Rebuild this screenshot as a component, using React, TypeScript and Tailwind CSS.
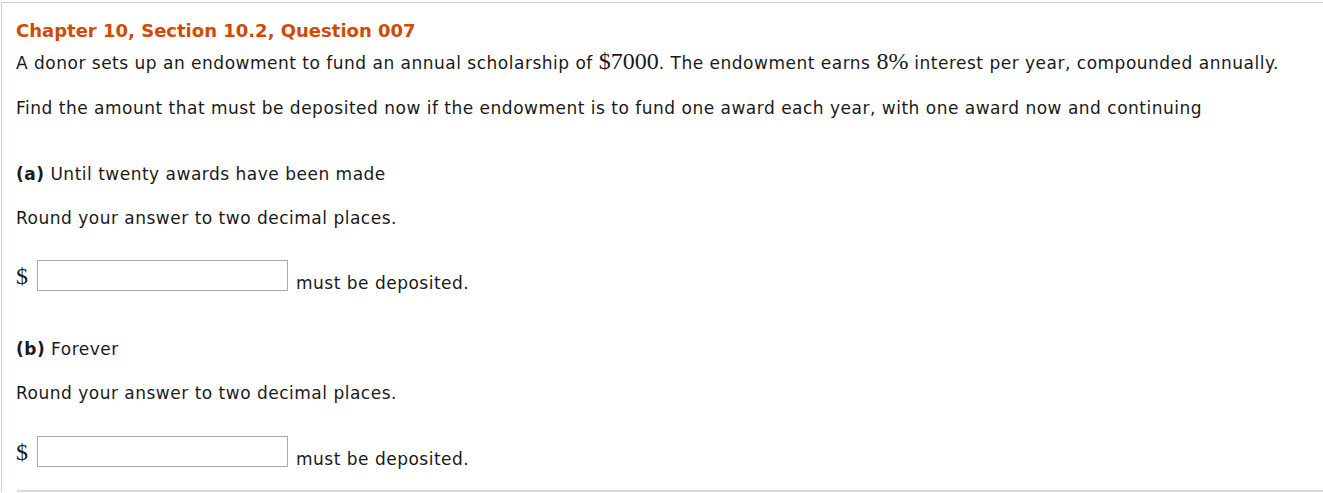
const body = "font-['Verdana','DejaVu_Sans',sans-serif] text-[17px] tracking-[0.5px] text-[#1a1a1a]"
const math = "font-['Liberation_Serif','Times_New_Roman',serif] text-[24px] leading-none tracking-normal"

function AnswerRow() {
  return (
    <div className="flex items-end h-[31px]">
      <span className={`${math} text-[21px] mb-[3px] mr-[9px]`}>$</span>
      <input
        type="text"
        className="w-[251px] h-[31px] border border-[#a9a9a9] bg-white"
      />
      <span className="ml-[8px] mb-[-5px]">must be deposited.</span>
    </div>
  )
}

export default function App() {
  return (
    <div className={`${body} w-[1323px] h-[493px] bg-white overflow-hidden`}>
      <div className="mt-[2px] ml-[1px] h-[490px] border-t border-l border-[#c5d3e4] flex flex-col">
        <div className="pl-[14px] pt-[17px] flex-1">
          {/* heading */}
          <h1 className="text-[18px] tracking-normal font-bold text-[#d04a02] leading-[22px]">
            Chapter 10, Section 10.2, Question 007
          </h1>
          <p className="mt-[7px] leading-[22px]">
            A donor sets up an endowment to fund an annual scholarship of{' '}
            <span className={math}>$7000</span>. The endowment earns{' '}
            <span className={math}>8%</span> interest per year, compounded annually.
          </p>
          <p className="mt-[23px] leading-[22px]">
            Find the amount that must be deposited now if the endowment is to fund one award
            each year, with one award now and continuing
          </p>

          {/* part a */}
          <p className="mt-[44px] leading-[22px]">
            <b>(a)</b> Until twenty awards have been made
          </p>
          <p className="mt-[22px] leading-[22px]">Round your answer to two decimal places.</p>
          <div className="mt-[31px]">
            <AnswerRow />
          </div>

          {/* part b */}
          <p className="mt-[47px] leading-[22px]">
            <b>(b)</b> Forever
          </p>
          <p className="mt-[22px] leading-[22px]">Round your answer to two decimal places.</p>
          <div className="mt-[32px]">
            <AnswerRow />
          </div>
        </div>
        <div className="ml-[15px] h-[2px] bg-[#d3dde8]" />
      </div>
    </div>
  )
}
